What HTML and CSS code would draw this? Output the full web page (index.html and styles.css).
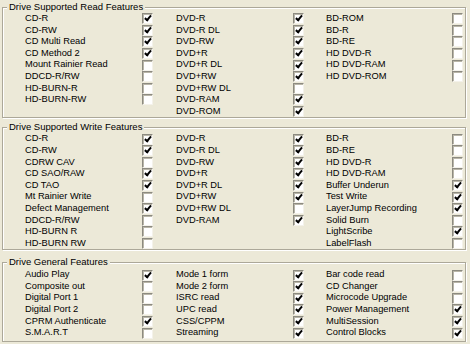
FILE: index.html
```html
<!DOCTYPE html>
<html lang="en">
<head>
    <meta charset="UTF-8">
    <title>Drive Features</title>
    <link rel="stylesheet" href="styles.css">
</head>
<body>
    <div class="panel">
        <!-- Read features -->
        <fieldset class="group read">
            <legend>Drive Supported Read Features</legend>
            <div class="cols">
                <div class="col">
                    <div class="row"><span class="name">CD-R</span><span class="cb on"></span></div>
                    <div class="row"><span class="name">CD-RW</span><span class="cb on"></span></div>
                    <div class="row"><span class="name">CD Multi Read</span><span class="cb on"></span></div>
                    <div class="row"><span class="name">CD Method 2</span><span class="cb on"></span></div>
                    <div class="row"><span class="name">Mount Rainier Read</span><span class="cb"></span></div>
                    <div class="row"><span class="name">DDCD-R/RW</span><span class="cb"></span></div>
                    <div class="row"><span class="name">HD-BURN-R</span><span class="cb"></span></div>
                    <div class="row"><span class="name">HD-BURN-RW</span><span class="cb"></span></div>
                </div>
                <div class="col">
                    <div class="row"><span class="name">DVD-R</span><span class="cb on"></span></div>
                    <div class="row"><span class="name">DVD-R DL</span><span class="cb on"></span></div>
                    <div class="row"><span class="name">DVD-RW</span><span class="cb on"></span></div>
                    <div class="row"><span class="name">DVD+R</span><span class="cb on"></span></div>
                    <div class="row"><span class="name">DVD+R DL</span><span class="cb on"></span></div>
                    <div class="row"><span class="name">DVD+RW</span><span class="cb on"></span></div>
                    <div class="row"><span class="name">DVD+RW DL</span><span class="cb"></span></div>
                    <div class="row"><span class="name">DVD-RAM</span><span class="cb on"></span></div>
                    <div class="row"><span class="name">DVD-ROM</span><span class="cb on"></span></div>
                </div>
                <div class="col wide">
                    <div class="row"><span class="name">BD-ROM</span><span class="cb"></span></div>
                    <div class="row"><span class="name">BD-R</span><span class="cb"></span></div>
                    <div class="row"><span class="name">BD-RE</span><span class="cb"></span></div>
                    <div class="row"><span class="name">HD DVD-R</span><span class="cb"></span></div>
                    <div class="row"><span class="name">HD DVD-RAM</span><span class="cb"></span></div>
                    <div class="row"><span class="name">HD DVD-ROM</span><span class="cb"></span></div>
                </div>
            </div>
        </fieldset>

        <!-- Write features -->
        <fieldset class="group write">
            <legend>Drive Supported Write Features</legend>
            <div class="cols">
                <div class="col">
                    <div class="row"><span class="name">CD-R</span><span class="cb on"></span></div>
                    <div class="row"><span class="name">CD-RW</span><span class="cb on"></span></div>
                    <div class="row"><span class="name">CDRW CAV</span><span class="cb"></span></div>
                    <div class="row"><span class="name">CD SAO/RAW</span><span class="cb on"></span></div>
                    <div class="row"><span class="name">CD TAO</span><span class="cb on"></span></div>
                    <div class="row"><span class="name">Mt Rainier Write</span><span class="cb"></span></div>
                    <div class="row"><span class="name">Defect Management</span><span class="cb on"></span></div>
                    <div class="row"><span class="name">DDCD-R/RW</span><span class="cb"></span></div>
                    <div class="row"><span class="name">HD-BURN R</span><span class="cb"></span></div>
                    <div class="row"><span class="name">HD-BURN RW</span><span class="cb"></span></div>
                </div>
                <div class="col">
                    <div class="row"><span class="name">DVD-R</span><span class="cb on"></span></div>
                    <div class="row"><span class="name">DVD-R DL</span><span class="cb on"></span></div>
                    <div class="row"><span class="name">DVD-RW</span><span class="cb on"></span></div>
                    <div class="row"><span class="name">DVD+R</span><span class="cb on"></span></div>
                    <div class="row"><span class="name">DVD+R DL</span><span class="cb on"></span></div>
                    <div class="row"><span class="name">DVD+RW</span><span class="cb on"></span></div>
                    <div class="row"><span class="name">DVD+RW DL</span><span class="cb"></span></div>
                    <div class="row"><span class="name">DVD-RAM</span><span class="cb on"></span></div>
                </div>
                <div class="col wide">
                    <div class="row"><span class="name">BD-R</span><span class="cb"></span></div>
                    <div class="row"><span class="name">BD-RE</span><span class="cb"></span></div>
                    <div class="row"><span class="name">HD DVD-R</span><span class="cb"></span></div>
                    <div class="row"><span class="name">HD DVD-RAM</span><span class="cb"></span></div>
                    <div class="row"><span class="name">Buffer Underun</span><span class="cb on"></span></div>
                    <div class="row"><span class="name">Test Write</span><span class="cb on"></span></div>
                    <div class="row"><span class="name">LayerJump Recording</span><span class="cb on"></span></div>
                    <div class="row"><span class="name">Solid Burn</span><span class="cb"></span></div>
                    <div class="row"><span class="name">LightScribe</span><span class="cb on"></span></div>
                    <div class="row"><span class="name">LabelFlash</span><span class="cb"></span></div>
                </div>
            </div>
        </fieldset>

        <!-- General features -->
        <fieldset class="group general">
            <legend>Drive General Features</legend>
            <div class="cols">
                <div class="col">
                    <div class="row"><span class="name">Audio Play</span><span class="cb on"></span></div>
                    <div class="row"><span class="name">Composite out</span><span class="cb"></span></div>
                    <div class="row"><span class="name">Digital Port 1</span><span class="cb"></span></div>
                    <div class="row"><span class="name">Digital Port 2</span><span class="cb"></span></div>
                    <div class="row"><span class="name">CPRM Authenticate</span><span class="cb on"></span></div>
                    <div class="row"><span class="name">S.M.A.R.T</span><span class="cb"></span></div>
                </div>
                <div class="col">
                    <div class="row"><span class="name">Mode 1 form</span><span class="cb on"></span></div>
                    <div class="row"><span class="name">Mode 2 form</span><span class="cb on"></span></div>
                    <div class="row"><span class="name">ISRC read</span><span class="cb on"></span></div>
                    <div class="row"><span class="name">UPC read</span><span class="cb on"></span></div>
                    <div class="row"><span class="name">CSS/CPPM</span><span class="cb on"></span></div>
                    <div class="row"><span class="name">Streaming</span><span class="cb on"></span></div>
                </div>
                <div class="col wide">
                    <div class="row"><span class="name">Bar code read</span><span class="cb"></span></div>
                    <div class="row"><span class="name">CD Changer</span><span class="cb"></span></div>
                    <div class="row"><span class="name">Microcode Upgrade</span><span class="cb"></span></div>
                    <div class="row"><span class="name">Power Management</span><span class="cb on"></span></div>
                    <div class="row"><span class="name">MultiSession</span><span class="cb on"></span></div>
                    <div class="row"><span class="name">Control Blocks</span><span class="cb on"></span></div>
                </div>
            </div>
        </fieldset>
    </div>
</body>
</html>
```

FILE: styles.css
```css
/* XP style dialog page */
body {
    margin: 0;
    padding: 0;
    background: #ece9d8;
    font-family: "Liberation Sans", Arial, sans-serif;
    font-size: 9.3px;
    color: #000;
}

.panel {
    padding: 1px 0 0 2px;
    width: 464px;
}

/* Etched group box */
.group {
    margin: 0;
    padding: 0;
    min-width: 0;
    border: 1px solid #aca899;
    box-shadow: 1px 1px 0 #fff, inset 1px 1px 0 #fff;
}

.group legend {
    margin-left: 4px;
    padding: 0 2px;
    line-height: 12px;
    font-size: 9.5px;
    background: #ece9d8;
}

.read {
    margin-bottom: 3px;
}

.write {
    margin-bottom: 6px;
}

.cols {
    display: flex;
    padding: 0 0 0 22px;
}

.general .cols {
    padding-top: 1px;
    padding-bottom: 2px;
}

.col {
    width: 128px;
}

.col + .col {
    margin-left: 23px;
}

.col.wide {
    width: 137px;
    margin-left: 22px;
}

.row {
    display: flex;
    align-items: center;
    justify-content: space-between;
    height: 11.6px;
    line-height: 11.6px;
    white-space: nowrap;
}

/* Classic sunken checkbox */
.cb {
    position: relative;
    box-sizing: border-box;
    width: 11px;
    height: 11px;
    flex: none;
    background: #fff;
    border-top: 1px solid #8c8a80;
    border-left: 1px solid #8c8a80;
    border-right: 1px solid #f4f2ea;
    border-bottom: 1px solid #f4f2ea;
    box-shadow: inset 1px 1px 0 #b9b6a8;
}

.cb.on::after {
    content: "";
    position: absolute;
    left: 3px;
    top: 0px;
    width: 2px;
    height: 5px;
    border-right: 2px solid #000;
    border-bottom: 2px solid #000;
    transform: rotate(40deg);
}
```
